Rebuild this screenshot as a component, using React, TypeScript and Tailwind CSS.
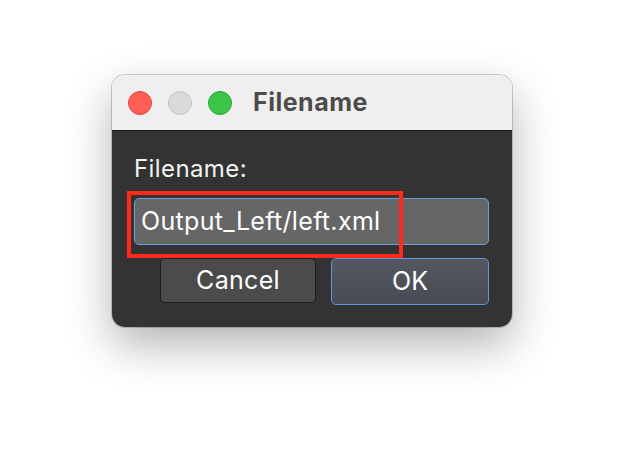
import React from 'react';

function TrafficLights() {
    return (
        <div className="flex items-center gap-4">
            <span className="h-6 w-6 rounded-full border border-[#e0443e] bg-[#ff5f57]"/>
            <span className="h-6 w-6 rounded-full border border-[#c4c4c4] bg-[#dadada]"/>
            <span className="h-6 w-6 rounded-full border border-[#1eab2e] bg-[#3ec548]"/>
        </div>
    );
}

export default function App() {
    return (
        <div className="flex h-[476px] w-[624px] justify-center bg-white pt-[75px] font-['Inter','Liberation_Sans',sans-serif]">
            <div className="flex h-[252px] w-[400px] flex-col overflow-hidden rounded-[13px] shadow-[0_0_0_1px_rgba(0,0,0,0.18),0_18px_45px_rgba(0,0,0,0.3)]">
                <div className="flex h-[56px] items-center gap-[21px] border-b border-[#1a1a1a] bg-[#efefef] pl-4">
                    <TrafficLights/>
                    <span className="text-[25px] font-bold tracking-[0.5px] text-[#4b4b4b]">Filename</span>
                </div>
                <div className="relative flex flex-1 flex-col bg-[#333333] pl-[22px] pr-[23px] pt-[24px]">
                    <label className="text-[24px] leading-[28px] tracking-[0.4px] text-[#f2f2f2]">Filename:</label>
                    <div className="mt-[15px] flex h-[47px] items-center rounded-[5px] border-[1.5px] border-[#6b9be0] bg-[#666666] pl-[6px]">
                        <span className="text-[25px] tracking-[0.33px] text-white">Output_Left/left.xml</span>
                    </div>
                    <div className="mt-[13px] flex gap-[15px] pl-[26px]">
                        <button className="h-[45px] w-[156px] rounded-[5px] border border-[#1e1e1e] bg-[#4b4b4b] text-[25px] tracking-[0.3px] text-white">
                            Cancel
                        </button>
                        <button className="h-[47px] flex-1 rounded-[5px] border-[1.5px] border-[#6395dc] bg-gradient-to-b from-[#545861] to-[#484b53] text-[25px] text-white">
                            OK
                        </button>
                    </div>
                    <div className="absolute left-[15px] top-[60px] h-[67px] w-[276px] border-4 border-[#ff2a1a]"/>
                </div>
            </div>
        </div>
    );
}
